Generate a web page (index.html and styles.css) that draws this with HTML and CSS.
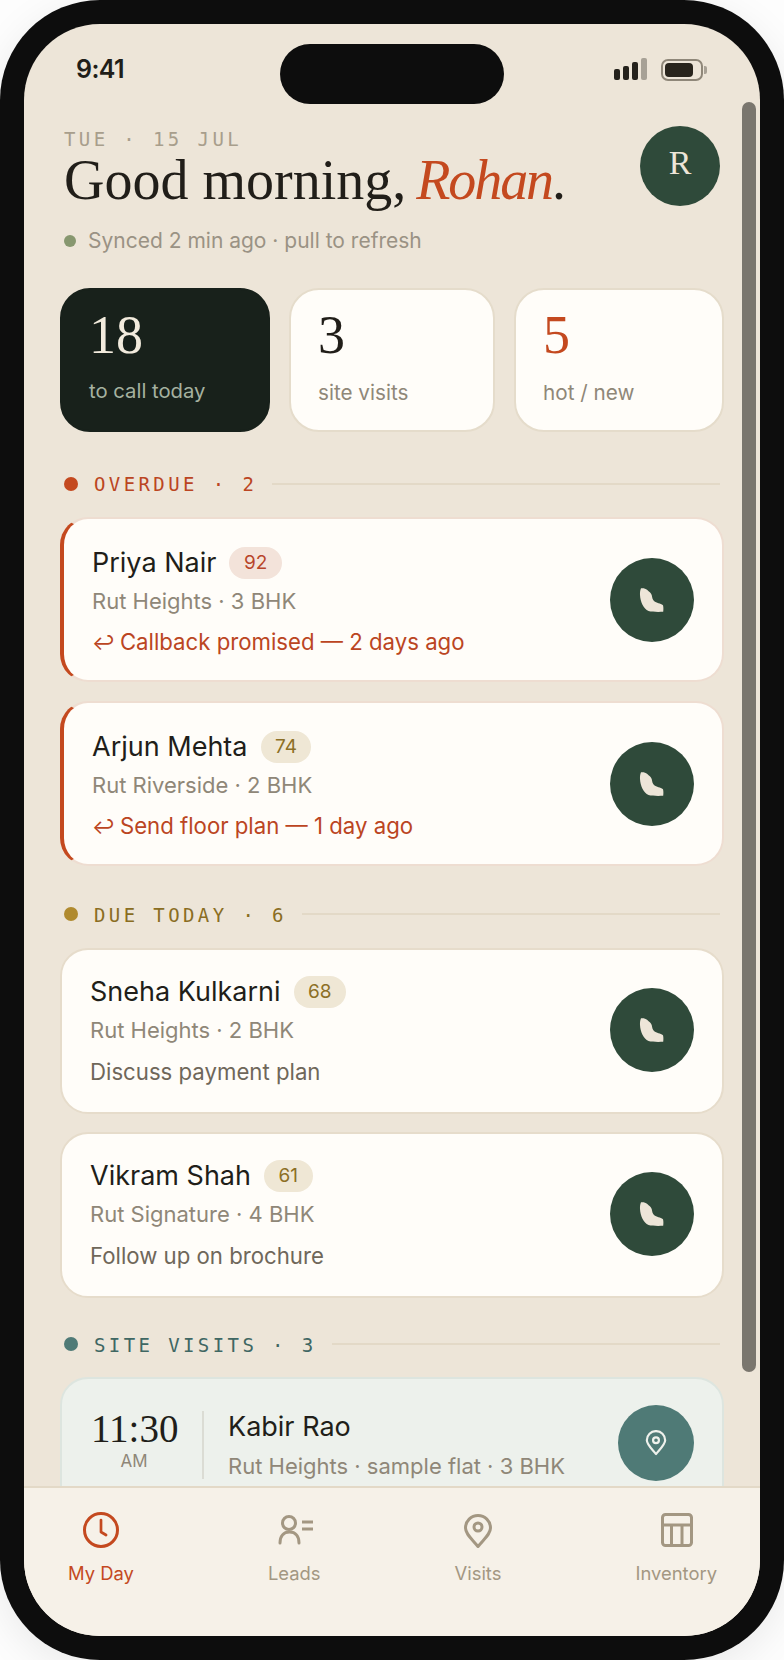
FILE: index.html
```html
<!DOCTYPE html>
<html lang="en">
<head>
<meta charset="utf-8">
<title>My Day</title>
<link rel="stylesheet" href="styles.css">
</head>
<body>
<div class="phone">
  <div class="screen">
    <div class="island"></div>
    <div class="scrollbar"></div>
    <div class="status">
      <span class="time">9:41</span>
      <div class="status-icons">
        <div class="signal"><i class="b1"></i><i class="b2"></i><i class="b3"></i><i class="b4"></i></div>
        <div class="battery"><div class="cell"><div class="charge"></div></div><div class="nub"></div></div>
      </div>
    </div>
    <main class="content">
      <header class="header">
        <div class="header-text">
          <div class="date">TUE · 15 JUL</div>
          <h1 class="greeting">Good morning, <em>Rohan</em>.</h1>
          <div class="sync"><span class="sync-dot"></span>Synced 2 min ago · pull to refresh</div>
        </div>
        <div class="avatar">R</div>
      </header>

      <section class="stats">
        <div class="stat stat-dark"><div class="stat-num">18</div><div class="stat-label">to call today</div></div>
        <div class="stat"><div class="stat-num">3</div><div class="stat-label">site visits</div></div>
        <div class="stat"><div class="stat-num hot">5</div><div class="stat-label">hot / new</div></div>
      </section>

      <div class="sec-head overdue"><span class="sec-dot"></span><span class="sec-title">OVERDUE · 2</span><span class="sec-line"></span></div>
      <div class="cards">
        <article class="card card-overdue">
          <div class="card-body">
            <div class="name-row"><span class="name">Priya Nair</span><span class="badge badge-hot">92</span></div>
            <div class="sub">Rut Heights · 3 BHK</div>
            <div class="note note-red"><span class="arrow">↩</span>Callback promised — 2 days ago</div>
          </div>
          <button class="call"><svg class="phone-ic" viewBox="0 0 24 24"><path d="M1 .3C3-.1 5.500.3 7.300 2C9 3.500 11 5 11.700 7C12.200 9.500 12.500 11.500 14 13C16.500 15.500 20.500 14.800 23 17.200C23.500 19 23.500 21.500 23.200 23.800C18 24 12 24 8.500 23C3.500 20.500.3 14 0 7C-.1 4.500.2 2 1 .3z"/></svg></button>
        </article>
        <article class="card card-overdue">
          <div class="card-body">
            <div class="name-row"><span class="name">Arjun Mehta</span><span class="badge badge-warm">74</span></div>
            <div class="sub">Rut Riverside · 2 BHK</div>
            <div class="note note-red"><span class="arrow">↩</span>Send floor plan — 1 day ago</div>
          </div>
          <button class="call"><svg class="phone-ic" viewBox="0 0 24 24"><path d="M1 .3C3-.1 5.500.3 7.300 2C9 3.500 11 5 11.700 7C12.200 9.500 12.500 11.500 14 13C16.500 15.500 20.500 14.800 23 17.200C23.500 19 23.500 21.500 23.200 23.800C18 24 12 24 8.500 23C3.500 20.500.3 14 0 7C-.1 4.500.2 2 1 .3z"/></svg></button>
        </article>
      </div>

      <div class="sec-head due"><span class="sec-dot"></span><span class="sec-title">DUE TODAY · 6</span><span class="sec-line"></span></div>
      <div class="cards cards-due">
        <article class="card card-due">
          <div class="card-body">
            <div class="name-row"><span class="name">Sneha Kulkarni</span><span class="badge badge-warm">68</span></div>
            <div class="sub">Rut Heights · 2 BHK</div>
            <div class="note">Discuss payment plan</div>
          </div>
          <button class="call"><svg class="phone-ic" viewBox="0 0 24 24"><path d="M1 .3C3-.1 5.500.3 7.300 2C9 3.500 11 5 11.700 7C12.200 9.500 12.500 11.500 14 13C16.500 15.500 20.500 14.800 23 17.200C23.500 19 23.500 21.500 23.200 23.800C18 24 12 24 8.500 23C3.500 20.500.3 14 0 7C-.1 4.500.2 2 1 .3z"/></svg></button>
        </article>
        <article class="card card-due">
          <div class="card-body">
            <div class="name-row"><span class="name">Vikram Shah</span><span class="badge badge-warm">61</span></div>
            <div class="sub">Rut Signature · 4 BHK</div>
            <div class="note">Follow up on brochure</div>
          </div>
          <button class="call"><svg class="phone-ic" viewBox="0 0 24 24"><path d="M1 .3C3-.1 5.500.3 7.300 2C9 3.500 11 5 11.700 7C12.200 9.500 12.500 11.500 14 13C16.500 15.500 20.500 14.800 23 17.200C23.500 19 23.500 21.500 23.200 23.800C18 24 12 24 8.500 23C3.500 20.500.3 14 0 7C-.1 4.500.2 2 1 .3z"/></svg></button>
        </article>
      </div>

      <div class="sec-head visits"><span class="sec-dot"></span><span class="sec-title">SITE VISITS · 3</span><span class="sec-line"></span></div>
      <article class="visit">
        <div class="visit-time"><div class="clock">11:30</div><div class="ampm">AM</div></div>
        <div class="visit-body">
          <div class="name">Kabir Rao</div>
          <div class="sub">Rut Heights · sample flat · 3 BHK</div>
        </div>
        <button class="pin-btn"><svg class="pin-ic" viewBox="0 0 24 28" fill="none" stroke="currentColor" stroke-width="2.400"><path d="M12 26C7 20 2 15.500 2 11a10 10 0 0 1 20 0c0 4.500-5 9-10 15z" stroke-linejoin="round"/><circle cx="12" cy="11" r="3.200"/></svg></button>
      </article>
    </main>
    <nav class="tabs">
      <div class="tab active">
        <svg class="tab-ic" viewBox="0 0 40 40" fill="none" stroke="currentColor" stroke-width="3" stroke-linecap="round" stroke-linejoin="round"><circle cx="20" cy="20" r="16.500"/><path d="M20 10v12l5 3" stroke-width="2.700"/></svg>
        <span>My Day</span>
      </div>
      <div class="tab">
        <svg class="tab-ic" viewBox="0 0 40 40" fill="none" stroke="currentColor" stroke-width="3" stroke-linecap="round"><circle cx="15" cy="13" r="6.500"/><path d="M6 33c0-7 3.500-11 9.500-11s9.500 4 9.500 11"/><path d="M28 12h11M28 19h11" stroke-linecap="butt"/></svg>
        <span>Leads</span>
      </div>
      <div class="tab">
        <svg class="tab-ic" viewBox="0 0 40 40" fill="none" stroke="currentColor" stroke-width="3" stroke-linejoin="round"><path d="M20 36.500C14 29 7.500 24 7.500 18a12.500 12.500 0 0 1 25 0C32.500 24 26 29 20 36.500z"/><circle cx="20" cy="17" r="4"/></svg>
        <span>Visits</span>
      </div>
      <div class="tab">
        <svg class="tab-ic" viewBox="0 0 40 40" fill="none" stroke="currentColor" stroke-width="3" stroke-linejoin="round"><rect x="6.500" y="4.500" width="29" height="31" rx="3"/><path d="M6.500 15h29M15.500 15v20.500M26 15v20.500"/></svg>
        <span>Inventory</span>
      </div>
    </nav>
  </div>
</div>
</body>
</html>
```
FILE: styles.css
```css
* { box-sizing: border-box; }
html, body { margin: 0; padding: 0; background: #fdfdfd; }
body { width: 784px; height: 1660px; overflow: hidden; font-family: Inter, "Liberation Sans", sans-serif; }
.phone { width: 784px; height: 1660px; padding: 24px; background: #0d0d0d; border-radius: 100px; box-shadow: 0 10px 40px rgba(0,0,0,.08); }
.screen { position: relative; height: 1612px; border-radius: 76px; overflow: hidden; background: #ede5d8; display: flex; flex-direction: column; }
.island { position: absolute; left: 256px; top: 20px; width: 224px; height: 60px; border-radius: 30px; background: #0d0d0d; }
.scrollbar { position: absolute; left: 718px; top: 78px; width: 14px; height: 1270px; border-radius: 7px; background: #7a766e; z-index: 3; }

.status { flex: none; height: 102px; padding: 28px 53px 0 52px; display: flex; justify-content: space-between; align-items: flex-start; }
.time { margin-top: 1px; font-size: 25px; line-height: 32px; font-weight: 600; letter-spacing: -.6px; color: #211e19; }
.status-icons { display: flex; align-items: flex-end; gap: 14px; height: 30px; }
.signal { display: flex; align-items: flex-end; gap: 3px; height: 22px; margin-bottom: 2px; }
.signal i { display: block; width: 6px; border-radius: 2px; background: #25221c; }
.signal .b1 { height: 11px; }
.signal .b2 { height: 14px; }
.signal .b3 { height: 18px; }
.signal .b4 { height: 22px; opacity: .35; }
.battery { display: flex; align-items: center; gap: 1px; margin-bottom: 1px; }
.cell { width: 42px; height: 22px; border: 2px solid #8f8779; border-radius: 7px; padding: 2px; }
.charge { width: 28px; height: 14px; background: #28241c; border-radius: 4px; }
.nub { width: 3px; height: 8px; background: #a8a195; border-radius: 0 2px 2px 0; }

.content { flex: 1; min-height: 0; overflow: hidden; padding: 0 36px; }
.header { display: flex; justify-content: space-between; align-items: flex-start; padding: 0 4px; }
.date { font-family: "DejaVu Sans Mono", monospace; font-size: 19px; line-height: 27px; letter-spacing: 3.400px; color: #a89e8c; }
.greeting { margin: -3px 0 0; font-family: "Liberation Serif", serif; font-weight: 400; font-size: 56px; line-height: 60px; color: #211e19; }
.greeting em { margin-left: -4px; color: #c4491f; font-style: italic; letter-spacing: -2.100px; }
.sync { display: flex; align-items: center; gap: 12px; margin-top: 18px; font-size: 21px; line-height: 26px; color: #9a9284; }
.sync-dot { width: 12px; height: 12px; border-radius: 50%; background: #87976f; }
.avatar { flex: none; width: 80px; height: 80px; padding-bottom: 6px; border-radius: 50%; background: #2f4a3a; color: #ede5d8; font-family: "Liberation Serif", serif; font-size: 34px; display: flex; align-items: center; justify-content: center; }

.stats { display: grid; grid-template-columns: 210px 206px 210px; gap: 19px; margin: 34px 0 38px; }
.stat { height: 144px; border-radius: 30px; background: #fffdf9; border: 2px solid #e5dccb; padding: 15px 20px 0 27px; }
.stat-dark { background: #18211b; border-color: #18211b; }
.stat-num { font-family: "Liberation Serif", serif; font-size: 54px; line-height: 60px; color: #211e19; }
.stat-dark .stat-num { color: #f2ebdd; }
.stat-num.hot { color: #c4491f; }
.stat-label { margin-top: 14px; font-size: 20.700px; line-height: 28px; color: #8f8778; }
.stat-dark .stat-label { margin-top: 12px; font-size: 20.300px; color: #a5b1a0; }

.sec-head { display: flex; align-items: center; height: 28px; margin: 35px 4px 19px; }
.stats + .sec-head { margin-top: 0; }
.visits { margin-top: 33px; margin-bottom: 18px; }
.sec-dot { flex: none; width: 14px; height: 14px; border-radius: 50%; margin-right: 16px; margin-top: -1px; }
.sec-title { font-family: "DejaVu Sans Mono", monospace; font-size: 19px; letter-spacing: 3.400px; white-space: nowrap; margin-right: 15px; }
.sec-line { flex: 1; height: 2px; background: #e3d9c7; margin-top: -1px; }
.overdue .sec-dot { background: #c4491f; }
.overdue .sec-title { color: #bb4522; }
.due .sec-dot { background: #b08a2e; }
.due .sec-title { color: #8a6d22; }
.visits .sec-dot { background: #4f7a76; }
.visits .sec-title { color: #3f6763; }

.cards { display: flex; flex-direction: column; gap: 19.500px; }
.cards-due { gap: 18px; }
.card { height: 164.500px; border-radius: 28px; background: #fffdf9; border: 2px solid #e6dccb; padding: 2px 28px 0 28px; display: flex; align-items: center; justify-content: space-between; }
.card-overdue { border-color: #eeddd1; border-left: 4px solid #c4491f; }
.card-due { height: 166px; padding-top: 0; padding-bottom: 2px; }
.card-body { min-width: 0; margin-top: 3px; }
.name-row { display: flex; align-items: center; gap: 13px; height: 32px; }
.name { font-size: 27px; line-height: 32px; color: #211e19; }
.badge { height: 32px; line-height: 32px; padding: 0 14.500px; border-radius: 16px; font-size: 19px; }
.badge-hot { background: #f3e3da; color: #b8452a; }
.badge-warm { background: #efe7d5; color: #8c6f25; }
.sub { margin-top: 8.500px; font-size: 22px; line-height: 28px; color: #8f8778; }
.note { margin-top: 12.500px; font-size: 22.200px; line-height: 28px; color: #6f675a; }
.card-due .sub { margin-top: 8px; }
.card-due .note { margin-top: 13.500px; }
.note-red { color: #bb4522; }
.arrow { margin-right: 5px; font-size: 20px; }
.call { flex: none; width: 84px; height: 84px; padding: 0; border: 0; border-radius: 50%; background: #2f4a3a; display: flex; align-items: center; justify-content: center; }
.phone-ic { width: 24px; height: 24px; fill: #ede5d8; overflow: visible; }

.visit { height: 180px; border-radius: 28px; background: #edf1ec; border: 2px solid #dde5df; padding: 32px 28px 0 28px; display: flex; align-items: flex-start; }
.visit-time { flex: none; width: 114px; height: 68px; border-right: 2px solid #dbdcd4; }
.clock { margin: -2px 0 0; padding-left: 1px; font-family: "Liberation Serif", serif; font-size: 39px; line-height: 40px; color: #211e19; }
.ampm { width: 88px; text-align: center; font-size: 17px; line-height: 24px; color: #8f8778; }
.visit-body { flex: 1; padding-left: 24px; }
.visit-body .sub { margin-top: 9px; }
.pin-btn { flex: none; width: 76px; height: 76px; margin-top: -6px; padding: 0; border: 0; border-radius: 50%; background: #4f7a76; color: #eef1ec; display: flex; align-items: center; justify-content: center; }
.pin-ic { width: 22px; height: 26px; }

.tabs { flex: none; position: relative; z-index: 2; height: 150px; background: #f6f1e8; border-top: 2px solid #e3d9c7; padding: 22px 43px 0 44px; display: flex; justify-content: space-between; align-items: flex-start; color: #a39782; }
.tab { display: flex; flex-direction: column; align-items: center; gap: 11px; font-size: 18.400px; line-height: 24px; }
.tab-ic { width: 40px; height: 40px; display: block; }
.tab.active { color: #c4491f; }
```
